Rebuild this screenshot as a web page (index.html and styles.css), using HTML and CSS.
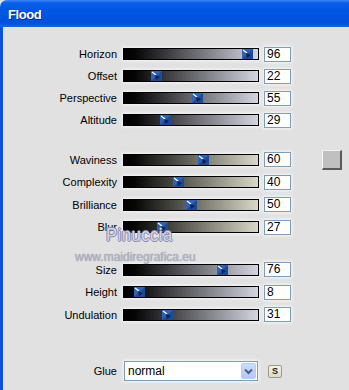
FILE: index.html
```html
<!DOCTYPE html>
<html>
<head>
<meta charset="utf-8">
<link rel="stylesheet" href="styles.css">
</head>
<body>
<div class="window">
  <div class="titlebar"><span class="title">Flood</span></div>
  <div class="client">
    <div class="group g1">
      <div class="row"><span class="label">Horizon</span><div class="track cool"><span class="thumb" style="left:118px"><svg width="11" height="10" viewBox="0 0 11 10"><rect width="11" height="10" fill="#2d62b6"/><path d="M0 10L11 0V10Z" fill="#1d4a98"/><path d="M1 1L5 4" stroke="#fff" stroke-width="1.2"/><path d="M4 4L9 6L5 9Z" fill="#0c2350"/></svg></span></div><span class="value">96</span></div>
      <div class="row"><span class="label">Offset</span><div class="track cool"><span class="thumb" style="left:27px"><svg width="11" height="10" viewBox="0 0 11 10"><rect width="11" height="10" fill="#2d62b6"/><path d="M0 10L11 0V10Z" fill="#1d4a98"/><path d="M1 1L5 4" stroke="#fff" stroke-width="1.2"/><path d="M4 4L9 6L5 9Z" fill="#0c2350"/></svg></span></div><span class="value">22</span></div>
      <div class="row"><span class="label">Perspective</span><div class="track cool"><span class="thumb" style="left:68px"><svg width="11" height="10" viewBox="0 0 11 10"><rect width="11" height="10" fill="#2d62b6"/><path d="M0 10L11 0V10Z" fill="#1d4a98"/><path d="M1 1L5 4" stroke="#fff" stroke-width="1.2"/><path d="M4 4L9 6L5 9Z" fill="#0c2350"/></svg></span></div><span class="value">55</span></div>
      <div class="row"><span class="label">Altitude</span><div class="track cool"><span class="thumb" style="left:36px"><svg width="11" height="10" viewBox="0 0 11 10"><rect width="11" height="10" fill="#2d62b6"/><path d="M0 10L11 0V10Z" fill="#1d4a98"/><path d="M1 1L5 4" stroke="#fff" stroke-width="1.2"/><path d="M4 4L9 6L5 9Z" fill="#0c2350"/></svg></span></div><span class="value">29</span></div>
    </div>
    <div class="group g2">
      <div class="row"><span class="label">Waviness</span><div class="track warm"><span class="thumb" style="left:74px"><svg width="11" height="10" viewBox="0 0 11 10"><rect width="11" height="10" fill="#2d62b6"/><path d="M0 10L11 0V10Z" fill="#1d4a98"/><path d="M1 1L5 4" stroke="#fff" stroke-width="1.2"/><path d="M4 4L9 6L5 9Z" fill="#0c2350"/></svg></span></div><span class="value">60</span><span class="swatch"></span></div>
      <div class="row"><span class="label">Complexity</span><div class="track warm"><span class="thumb" style="left:49px"><svg width="11" height="10" viewBox="0 0 11 10"><rect width="11" height="10" fill="#2d62b6"/><path d="M0 10L11 0V10Z" fill="#1d4a98"/><path d="M1 1L5 4" stroke="#fff" stroke-width="1.2"/><path d="M4 4L9 6L5 9Z" fill="#0c2350"/></svg></span></div><span class="value">40</span></div>
      <div class="row"><span class="label">Brilliance</span><div class="track warm"><span class="thumb" style="left:62px"><svg width="11" height="10" viewBox="0 0 11 10"><rect width="11" height="10" fill="#2d62b6"/><path d="M0 10L11 0V10Z" fill="#1d4a98"/><path d="M1 1L5 4" stroke="#fff" stroke-width="1.2"/><path d="M4 4L9 6L5 9Z" fill="#0c2350"/></svg></span></div><span class="value">50</span></div>
      <div class="row"><span class="label">Blur</span><div class="track warm"><span class="thumb" style="left:33px"><svg width="11" height="10" viewBox="0 0 11 10"><rect width="11" height="10" fill="#2d62b6"/><path d="M0 10L11 0V10Z" fill="#1d4a98"/><path d="M1 1L5 4" stroke="#fff" stroke-width="1.2"/><path d="M4 4L9 6L5 9Z" fill="#0c2350"/></svg></span></div><span class="value">27</span></div>
    </div>
    <div class="group g3">
      <div class="row"><span class="label">Size</span><div class="track cool"><span class="thumb" style="left:93px"><svg width="11" height="10" viewBox="0 0 11 10"><rect width="11" height="10" fill="#2d62b6"/><path d="M0 10L11 0V10Z" fill="#1d4a98"/><path d="M1 1L5 4" stroke="#fff" stroke-width="1.2"/><path d="M4 4L9 6L5 9Z" fill="#0c2350"/></svg></span></div><span class="value">76</span></div>
      <div class="row"><span class="label">Height</span><div class="track cool"><span class="thumb" style="left:10px"><svg width="11" height="10" viewBox="0 0 11 10"><rect width="11" height="10" fill="#2d62b6"/><path d="M0 10L11 0V10Z" fill="#1d4a98"/><path d="M1 1L5 4" stroke="#fff" stroke-width="1.2"/><path d="M4 4L9 6L5 9Z" fill="#0c2350"/></svg></span></div><span class="value">8</span></div>
      <div class="row"><span class="label">Undulation</span><div class="track cool"><span class="thumb" style="left:38px"><svg width="11" height="10" viewBox="0 0 11 10"><rect width="11" height="10" fill="#2d62b6"/><path d="M0 10L11 0V10Z" fill="#1d4a98"/><path d="M1 1L5 4" stroke="#fff" stroke-width="1.2"/><path d="M4 4L9 6L5 9Z" fill="#0c2350"/></svg></span></div><span class="value">31</span></div>
    </div>
    <div class="glue-row">
      <span class="label">Glue</span>
      <div class="select"><span class="select-text">normal</span><span class="select-btn"><svg width="9" height="7" viewBox="0 0 9 7"><path d="M1 1.5L4.5 5L8 1.5" fill="none" stroke="#4d6185" stroke-width="2"/></svg></span></div>
      <span class="sbtn">S</span>
    </div>
    <div class="watermark">
      <span class="wm-name">Pinuccia</span>
      <span class="wm-url">www.maidiregrafica.eu</span>
    </div>
  </div>
</div>
</body>
</html>
```
FILE: styles.css
```css
html, body {
  margin: 0;
  padding: 0;
  width: 349px;
  height: 390px;
  overflow: hidden;
  background: #e1e1e1;
}
.window {
  width: 349px;
  height: 390px;
  display: flex;
  flex-direction: column;
  font-family: "Liberation Sans", Arial, sans-serif;
}
.titlebar {
  height: 27px;
  box-sizing: border-box;
  padding: 5px 0 0 8px;
  border-top-left-radius: 7px;
  background: linear-gradient(#3b86f4 0px, #0a5fe8 3px, #0056e4 40%, #0051dc 85%, #1664ec 100%);
}
.title {
  display: block;
  line-height: 20px;
  font-size: 13px;
  font-weight: bold;
  letter-spacing: -0.4px;
  color: #fff;
  text-shadow: 1px 1px 0 #0a2a8a;
}
.client {
  flex: 1;
  position: relative;
  border-left: 3px solid #0d50dc;
  background: #e1e1e1;
  padding-top: 16px;
}
.group {
  display: flex;
  flex-direction: column;
}
.g1 .row { height: 22px; }
.g2 { margin-top: 17.5px; }
.g2 .row { height: 22.5px; }
.g3 { margin-top: 20px; }
.g3 .row { height: 22.5px; }
.row {
  display: flex;
  align-items: center;
}
.label {
  width: 114px;
  margin-right: 6px;
  text-align: right;
  font-size: 11px;
  color: #000;
}
.track {
  position: relative;
  width: 136px;
  height: 12px;
  box-sizing: border-box;
  border: 1px solid #000;
  margin-right: 5px;
  box-shadow: 0 0 3px 1px rgba(255,255,255,0.7);
}
.track.cool { background: linear-gradient(to right, #000 0%, #050506 8%, #d5d5e1 100%); }
.track.warm { background: linear-gradient(to right, #000 0%, #060605 8%, #d9d9c9 100%); }
.thumb {
  position: absolute;
  top: 0;
  width: 11px;
  height: 10px;
  display: block;
}
.thumb svg { display: block; }
.value {
  width: 27px;
  height: 15px;
  box-sizing: border-box;
  border: 1px solid #7f9db9;
  background: #fff;
  font-size: 12px;
  line-height: 13px;
  padding-left: 2px;
  color: #000;
  box-shadow: 0 0 3px 1px rgba(255,255,255,0.7);
}
.swatch {
  width: 20px;
  height: 20px;
  box-sizing: border-box;
  margin-left: 31px;
  background: #c0c0c0;
  border-top: 1px solid #f2f2f2;
  border-left: 1px solid #f2f2f2;
  border-right: 2px solid #5a5a5a;
  border-bottom: 2px solid #5a5a5a;
}
.glue-row {
  display: flex;
  align-items: center;
  height: 22px;
  margin-top: 34px;
}
.glue-row .label { margin-right: 7px; }
.select {
  width: 134px;
  height: 20px;
  box-sizing: border-box;
  border: 1px solid #7f9db9;
  background: #fff;
  display: flex;
  align-items: center;
  padding: 1px;
  box-shadow: 0 0 3px 1px rgba(255,255,255,0.7);
}
.select-text {
  flex: 1;
  font-size: 12px;
  padding-left: 2px;
  color: #000;
}
.select-btn {
  width: 15px;
  height: 16px;
  box-sizing: border-box;
  border-radius: 2px;
  background: linear-gradient(#cddcfc, #b3c8f6);
  border: 1px solid #b8cbf4;
  display: flex;
  align-items: center;
  justify-content: center;
}
.select-btn svg { display: block; }
.sbtn {
  width: 14px;
  height: 13px;
  box-sizing: border-box;
  margin-left: 10px;
  background: linear-gradient(#f4f2e6, #dedac6);
  border: 1px solid #9c9a8c;
  border-radius: 2px;
  font-size: 9px;
  font-weight: bold;
  line-height: 11px;
  text-align: center;
  color: #222;
}
.watermark {
  position: absolute;
  left: 0;
  top: 0;
  width: 0;
  height: 0;
}
.wm-name {
  position: absolute;
  left: 103px;
  top: 198px;
  font-size: 19px;
  line-height: 19px;
  letter-spacing: 0.5px;
  color: #d4d4ec;
  white-space: nowrap;
  transform: scaleX(0.88);
  transform-origin: left top;
  text-shadow: 1px 0 0 #8a8aa8, -1px 0 0 #8a8aa8, 0 1px 0 #8a8aa8, 0 -1px 0 #8a8aa8;
}
.wm-url {
  position: absolute;
  left: 72px;
  top: 224px;
  font-size: 12px;
  line-height: 12px;
  color: #b4b4c4;
  white-space: nowrap;
  text-shadow: 0 0 1px #8c8c9c;
}
```
